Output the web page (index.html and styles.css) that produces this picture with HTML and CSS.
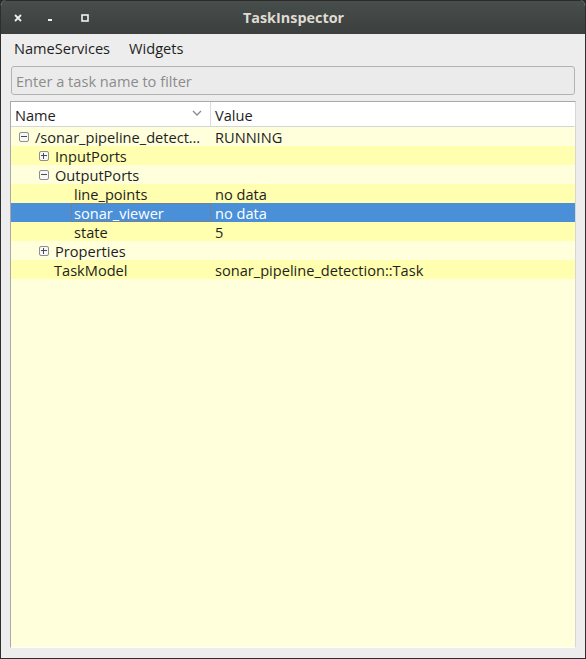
FILE: index.html
```html
<!DOCTYPE html>
<html>
<head>
<meta charset="utf-8">
<link rel="stylesheet" href="styles.css">
</head>
<body>
<div class="window">
  <div class="titlebar">
    <div class="wbtns">
      <span class="wbtn close"><svg width="8" height="8" viewBox="0 0 8 8"><path d="M1 1L7 7M7 1L1 7" stroke="#f0f0f0" stroke-width="1.8"/></svg></span>
      <span class="wbtn min"><svg width="8" height="8" viewBox="0 0 8 8"><rect x="2" y="5" width="4" height="2" fill="#f0f0f0"/></svg></span>
      <span class="wbtn max"><svg width="8" height="8" viewBox="0 0 8 8"><rect x="1" y="1" width="6" height="6" fill="none" stroke="#f0f0f0" stroke-width="1.6"/></svg></span>
    </div>
    <div class="title">TaskInspector</div>
  </div>
  <div class="menubar">
    <span class="menu">NameServices</span>
    <span class="menu">Widgets</span>
  </div>
  <div class="filterwrap">
    <input class="filter" type="text" placeholder="Enter a task name to filter">
  </div>
  <div class="tree">
    <div class="header">
      <div class="hcell hname"><span>Name</span><svg class="chev" width="10" height="6" viewBox="0 0 10 6"><path d="M1 1L5 5L9 1" fill="none" stroke="#8a8a8a" stroke-width="1.3"/></svg></div>
      <div class="hcell hvalue">Value</div>
    </div>
    <div class="rows">
      <div class="row">
        <div class="cell name l0"><span class="exp minus"></span><span class="txt">/sonar_pipeline_detect…</span></div>
        <div class="cell value">RUNNING</div>
      </div>
      <div class="row alt">
        <div class="cell name l1"><span class="exp plus"></span><span class="txt">InputPorts</span></div>
        <div class="cell value"></div>
      </div>
      <div class="row">
        <div class="cell name l1"><span class="exp minus"></span><span class="txt">OutputPorts</span></div>
        <div class="cell value"></div>
      </div>
      <div class="row alt">
        <div class="cell name l2"><span class="txt">line_points</span></div>
        <div class="cell value">no data</div>
      </div>
      <div class="row sel">
        <div class="cell name l2"><span class="txt focus">sonar_viewer</span></div>
        <div class="cell value">no data</div>
      </div>
      <div class="row alt">
        <div class="cell name l2"><span class="txt">state</span></div>
        <div class="cell value">5</div>
      </div>
      <div class="row">
        <div class="cell name l1"><span class="exp plus"></span><span class="txt">Properties</span></div>
        <div class="cell value"></div>
      </div>
      <div class="row alt">
        <div class="cell name l1n"><span class="txt">TaskModel</span></div>
        <div class="cell value">sonar_pipeline_detection::Task</div>
      </div>
    </div>
  </div>
</div>
</body>
</html>
```
FILE: styles.css
```css
* { box-sizing: border-box; }
html, body { margin: 0; padding: 0; }
body {
  width: 586px;
  height: 659px;
  background: #2b2b2b;
  font-family: "Open Sans", "DejaVu Sans", sans-serif;
  font-size: 14.6px;
  color: #1e1e1e;
  overflow: hidden;
}
.window {
  width: 586px;
  height: 659px;
  display: flex;
  flex-direction: column;
  background: #ededed;
  border: 1px solid #2e2e2e;
  border-top: none;
  border-radius: 6px 6px 0 0;
  overflow: hidden;
}
.titlebar {
  height: 34px;
  flex: none;
  position: relative;
  background: linear-gradient(#474e4b, #3b3f3d);
  border-top: 1px solid #2b2b2b;
  display: flex;
  align-items: center;
}
.wbtns {
  display: flex;
  align-items: center;
  padding-left: 12px;
}
.wbtn { width: 10px; height: 10px; display: flex; align-items: center; justify-content: center; }
.wbtn.min { margin-left: 22px; }
.wbtn.max { margin-left: 25px; }
.title {
  position: absolute;
  left: 0; right: 0; top: 0; bottom: 0;
  display: flex;
  align-items: center;
  justify-content: center;
  color: #dfdbd2;
  font-weight: bold;
  font-size: 14.4px;
  padding-left: 1px;
}
.menubar {
  height: 27px;
  flex: none;
  display: flex;
  align-items: center;
  padding-left: 13px;
  padding-top: 1px;
  gap: 19px;
  background: #ededed;
}
.menu { color: #1e1e1e; }
.filterwrap {
  flex: none;
  padding: 5px 10px 0 10px;
}
.filter {
  display: block;
  width: 100%;
  height: 29px;
  margin: 0;
  border: 1px solid #b3b3b3;
  border-radius: 3px;
  background: #ebebeb;
  font-family: inherit;
  font-size: 14.6px;
  padding: 1px 4px 0 4px;
  color: #1e1e1e;
  outline: none;
}
.filter::placeholder { color: #8c8c8c; }
.tree {
  flex: 1;
  margin: 6px 9px 10px 9px;
  border: 1px solid #a9a9a9;
  border-right-color: #d6d6d6;
  border-bottom-color: #ffffff;
  background: #ffffdc;
  display: flex;
  flex-direction: column;
}
.header {
  height: 25px;
  flex: none;
  display: grid;
  grid-template-columns: 200px 1fr;
  background: #ffffff;
  border-bottom: 1px solid #d5d5d5;
  border-right: 1px solid #ffffff;
}
.hcell {
  display: flex;
  align-items: center;
  padding-left: 4px;
  padding-top: 1px;
  color: #1e1e1e;
}
.hname {
  border-right: 1px solid #dcdcdc;
  justify-content: space-between;
  padding-right: 8px;
}
.chev { margin-top: -3px; }
.hvalue { padding-left: 4px; }
.rows { display: flex; flex-direction: column; }
.row {
  height: 19px;
  display: grid;
  grid-template-columns: 200px 1fr;
  background: #ffffdc;
}
.row.alt { background: #ffffaf; }
.row.sel { background: #4a90d9; color: #ffffff; }
.cell {
  display: flex;
  align-items: center;
  white-space: nowrap;
  overflow: hidden;
  padding-top: 1px;
}
.cell.value { padding-left: 4px; }
.name.l0 { padding-left: 8px; }
.name.l1 { padding-left: 28px; }
.name.l1n { padding-left: 40px; }
.name.l2 { padding-left: 60px; }
.exp {
  width: 10px;
  height: 10px;
  border: 1px solid #8e8e8e;
  border-radius: 2px;
  background: #f7f7f7;
  position: relative;
  margin-right: 3px;
  flex: none;
}
.exp::before {
  content: "";
  position: absolute;
  left: 1px; top: 3px;
  width: 6px; height: 2px;
  border-top: 1px solid #4b4b4b;
}
.exp.plus::after {
  content: "";
  position: absolute;
  left: 3px; top: 1px;
  width: 1px; height: 6px;
  background: #4b4b4b;
}
.txt { padding: 0 3px 0 3px; }
.focus {
  border: 1px dotted #a07050;
  height: 19px;
  margin-top: -1px;
  display: flex;
  align-items: center;
  flex: 1;
  padding-left: 2px;
}
```
